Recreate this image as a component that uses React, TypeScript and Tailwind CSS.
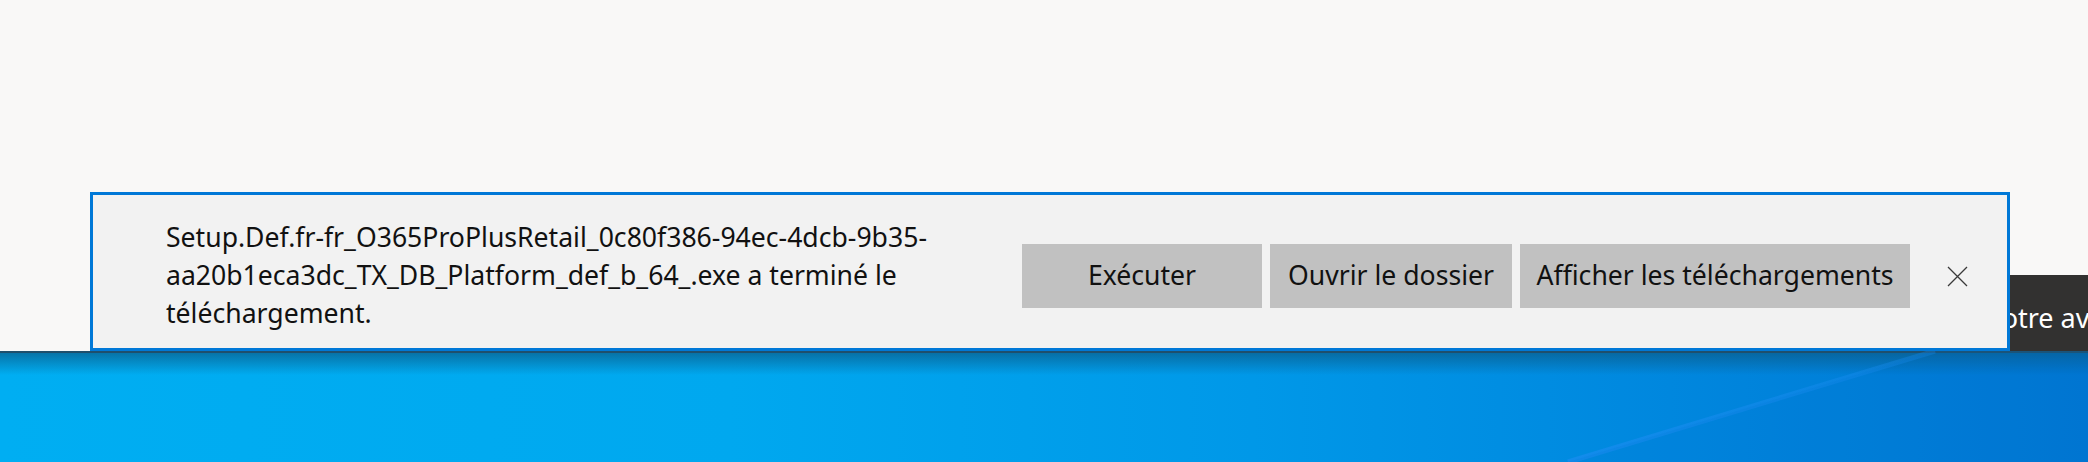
import React from "react";

const font = { fontFamily: '"Noto Sans", "Open Sans", sans-serif' };

function CloseIcon() {
  return (
    <svg width="21" height="21" viewBox="0 0 21 21" fill="none">
      <path d="M1 1 L20 20 M20 1 L1 20" stroke="#3a3a3a" strokeWidth="1.3" />
    </svg>
  );
}

export default function App() {
  return (
    <div
      className="w-[2088px] h-[462px] overflow-hidden flex flex-col"
      style={font}
    >
      {/* Browser window */}
      <div className="relative h-[351px] bg-[#f9f8f7] shrink-0">
        {/* Feedback button behind the bar */}
        <div className="absolute right-0 bottom-0 w-[128px] h-[76px] bg-[#323130] text-white text-[27px] leading-[34px] pl-[26px] pt-[26px] whitespace-nowrap overflow-hidden">
          Votre avis
        </div>

        {/* Download notification bar */}
        <div className="absolute left-[90px] bottom-0 w-[1920px] h-[159px] border-[3px] border-[#0078d7] bg-[#f2f2f2] flex items-center pt-[7px] text-[#111]">
          <div className="w-[929px] pl-[73px] text-[26.6px] leading-[38px] shrink-0">
            Setup.Def.fr-fr_O365ProPlusRetail_0c80f386-94ec-4dcb-9b35-
            <br />
            aa20b1eca3dc_TX_DB_Platform_def_b_64_.exe a terminé le
            <br />
            téléchargement.
          </div>
          <div className="flex gap-[8px] shrink-0 mt-[2px]">
            <button className="w-[240px] h-[64px] bg-[#c1c1c1] text-[26.6px] text-[#111] flex items-center justify-center">
              Exécuter
            </button>
            <button className="w-[242px] h-[64px] bg-[#c1c1c1] text-[26.6px] text-[#111] flex items-center justify-center whitespace-nowrap">
              Ouvrir le dossier
            </button>
            <button className="w-[390px] h-[64px] bg-[#c1c1c1] text-[26.6px] text-[#111] flex items-center justify-center whitespace-nowrap">
              Afficher les téléchargements
            </button>
          </div>
          <div className="ml-[37px] mt-[2px] flex items-center">
            <CloseIcon />
          </div>
        </div>
      </div>

      {/* Desktop wallpaper */}
      <div className="relative flex-1 bg-[linear-gradient(90deg,#00aef2_0%,#00a8ef_35%,#0098e8_60%,#0087de_80%,#0076d2_100%)]">
        <div className="absolute inset-x-0 top-0 h-[2px] bg-[#1f4f6c]" />
        <div className="absolute inset-x-0 top-[2px] h-[22px] bg-gradient-to-b from-[#0a5b88]/70 to-transparent" />
        <svg
          className="absolute inset-0"
          width="2088"
          height="111"
          viewBox="0 0 2088 111"
        >
          <defs>
            <linearGradient id="streak" x1="0" y1="1" x2="1" y2="0">
              <stop offset="0" stopColor="#1a8cf0" stopOpacity="0.7" />
              <stop offset="1" stopColor="#1a8cf0" stopOpacity="0.3" />
            </linearGradient>
          </defs>
          <path d="M1935 0 L1568 111" stroke="url(#streak)" strokeWidth="5" />
          <polygon points="1935,0 2088,0 2088,111 1568,111" fill="#0070cf" opacity="0.15" />
        </svg>
      </div>
    </div>
  );
}
